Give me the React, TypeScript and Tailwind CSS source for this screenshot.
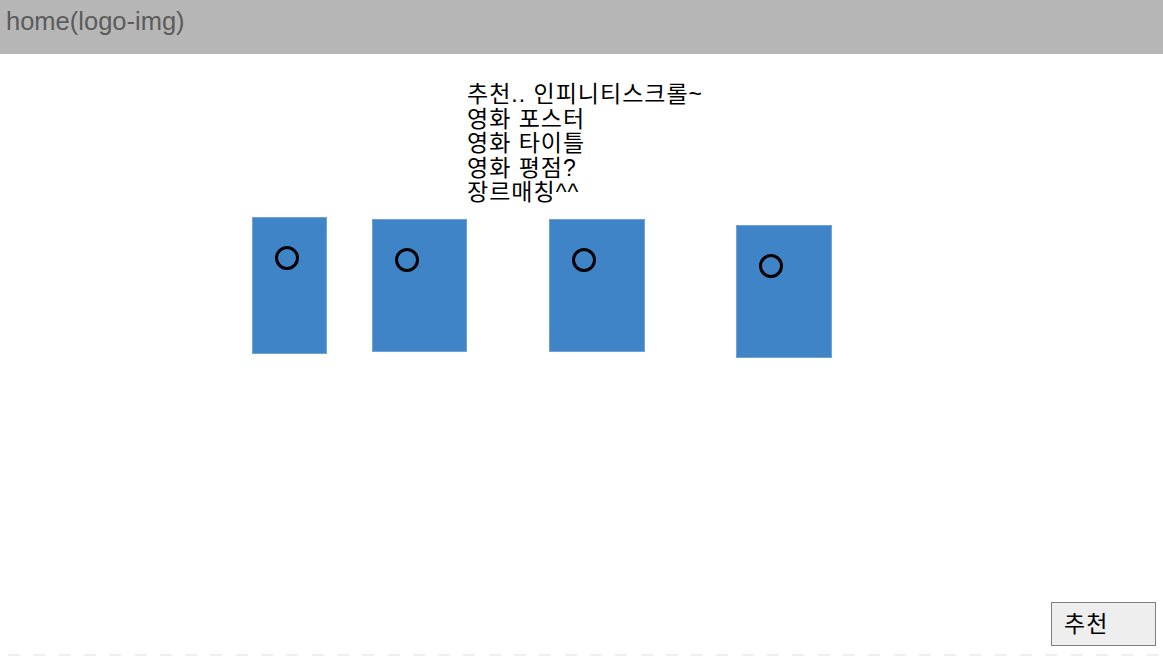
import React from "react";

const cards = [
  { w: "w-[75px]", h: "h-[137px]", mt: "mt-0", ml: "ml-0" },
  { w: "w-[95px]", h: "h-[133px]", mt: "mt-[2px]", ml: "ml-[45px]" },
  { w: "w-[96px]", h: "h-[133px]", mt: "mt-[2px]", ml: "ml-[82px]" },
  { w: "w-[96px]", h: "h-[133px]", mt: "mt-[8px]", ml: "ml-[91px]" },
];

export default function App() {
  return (
    <div className="h-[656px] w-full bg-white flex flex-col overflow-hidden font-['Liberation_Sans','Noto_Sans_CJK_KR',sans-serif]">
      {/* header */}
      <div className="h-[54px] shrink-0 bg-[#b6b6b6] flex items-start pl-[6px] pt-[6px]">
        <span className="text-[25.5px] leading-[30px] text-[#5b5b5b]">home(logo-img)</span>
      </div>

      {/* notes */}
      <div className="ml-[467px] mt-[28px] text-[23px] tracking-[1px] leading-[24.5px] text-black">
        <p>추천.. 인피니티스크롤~</p>
        <p>영화 포스터</p>
        <p>영화 타이틀</p>
        <p>영화 평점?</p>
        <p>장르매칭^^</p>
      </div>

      {/* posters */}
      <div className="flex items-start ml-[252px] mt-[12px]">
        {cards.map((c, i) => (
          <div
            key={i}
            className={`${c.w} ${c.h} ${c.mt} ${c.ml} bg-[#3e84c6] border border-[#6ea2d8] pl-[22px] pt-[28px]`}
          >
            <div className="w-6 h-6 rounded-full border-[3px] border-black" />
          </div>
        ))}
      </div>

      <div className="flex-1" />

      {/* button */}
      <div className="flex justify-end pr-[7px] pb-[8px]">
        <button className="w-[105px] h-[44px] bg-[#eeeeee] border border-[#7f7f7f] text-left pl-[12px] text-[23px] tracking-[1px] text-black">
          추천
        </button>
      </div>

      <div className="h-[2px] shrink-0 ml-[8px] bg-[repeating-linear-gradient(90deg,#efefef_0_12px,transparent_12px_25.3px)]" />
    </div>
  );
}
